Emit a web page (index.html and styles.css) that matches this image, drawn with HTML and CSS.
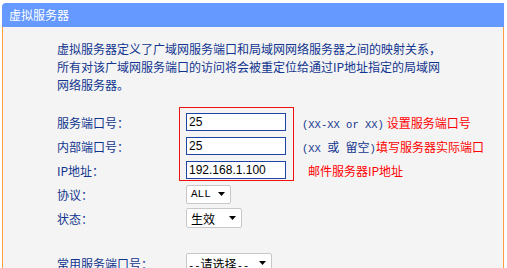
FILE: index.html
```html
<!DOCTYPE html>
<html lang="zh-CN">
<head>
<meta charset="utf-8">
<title>虚拟服务器</title>
<link rel="stylesheet" href="styles.css">
</head>
<body>
<div class="panel">
  <div class="panel-head">虚拟服务器</div>
  <div class="panel-body">
    <p class="desc">虚拟服务器定义了广域网服务端口和局域网网络服务器之间的映射关系，<br>所有对该广域网服务端口的访问将会被重定位给通过IP地址指定的局域网<br>网络服务器。</p>
    <div class="form">
      <div class="group">
        <div class="row">
          <span class="label">服务端口号：</span>
          <span class="input">25</span>
          <span class="hint"><span class="mono">(XX-XX or XX)</span> <span class="note">设置服务端口号</span></span>
        </div>
        <div class="row">
          <span class="label">内部端口号：</span>
          <span class="input">25</span>
          <span class="hint"><span class="mono">(XX </span>或<span class="mono"> </span>留空<span class="mono">)</span><span class="note">填写服务器实际端口</span></span>
        </div>
        <div class="row">
          <span class="label">IP地址：</span>
          <span class="input">192.168.1.100</span>
          <span class="hint"><span class="note note-pad">邮件服务器IP地址</span></span>
        </div>
      </div>
      <div class="row">
        <span class="label">协议：</span>
        <span class="select sel-all"><span class="mono">ALL</span><svg class="arrow" width="7" height="4" viewBox="0 0 7 4"><path d="M0 0H7L3.5 4Z" fill="#000"/></svg></span>
      </div>
      <div class="row">
        <span class="label">状态：</span>
        <span class="select sel-state"><span>生效</span><svg class="arrow" width="7" height="4" viewBox="0 0 7 4"><path d="M0 0H7L3.5 4Z" fill="#000"/></svg></span>
      </div>
      <div class="row row-gap">
        <span class="label">常用服务端口号：</span>
        <span class="select sel-common"><span><span class="mono">--</span>请选择<span class="mono">--</span></span><svg class="arrow" width="7" height="4" viewBox="0 0 7 4"><path d="M0 0H7L3.5 4Z" fill="#000"/></svg></span>
      </div>
    </div>
  </div>
</div>
</body>
</html>
```

FILE: styles.css
```css
html, body {
  margin: 0;
  padding: 0;
  background: #ffffff;
  overflow: hidden;
}

body {
  font-family: "Noto Sans CJK SC", "Liberation Sans", sans-serif;
  font-size: 12px;
  color: #12358f;
}

.panel {
  margin: 3px 0 0 2px;
  width: 502px;
}

.panel-head {
  height: 24px;
  line-height: 23px;
  background: #6699ff;
  color: #ffffff;
  padding-left: 7px;
  border-top-left-radius: 4px;
  font-size: 12px;
}

.panel-body {
  background: #f4f4f4;
  border-left: 1px solid #ff9f3f;
  border-right: 1px solid #ff9f3f;
  min-height: 300px;
  padding-top: 13px;
}

.desc {
  margin: 0 0 16px 54px;
  line-height: 18px;
}

.form {
  padding-left: 54px;
}

.group {
  position: relative;
}

.group::before {
  content: "";
  position: absolute;
  left: 122px;
  top: -3px;
  width: 115px;
  height: 74px;
  box-sizing: border-box;
  border: 1px solid #ee1111;
}

.row {
  display: flex;
  align-items: center;
  height: 24px;
  white-space: nowrap;
}

.row-gap {
  margin-top: 21px;
}

.label {
  width: 129px;
  flex: none;
}

.input {
  box-sizing: border-box;
  width: 100px;
  height: 18px;
  border: 1px solid #1f44a6;
  background: #ffffff;
  color: #000000;
  padding-left: 2px;
  font-family: "Liberation Sans", sans-serif;
  font-size: 12px;
  line-height: 16px;
  flex: none;
}

.hint {
  margin-left: 16px;
}

.mono {
  font-family: "Liberation Mono", monospace;
  font-size: 10.5px;
}

.note {
  color: #ff0000;
}

.note-pad {
  padding-left: 6px;
}

.select {
  box-sizing: border-box;
  display: flex;
  align-items: center;
  justify-content: space-between;
  height: 20px;
  border: 1px solid #c8c8c8;
  border-radius: 2px;
  background: #ffffff;
  color: #000000;
  padding: 0 5px 0 4px;
  flex: none;
}

.sel-all {
  width: 45px;
  height: 19px;
}

.sel-all .mono {
  font-size: 11px;
}

.sel-state {
  width: 56px;
}

.sel-common {
  width: 86px;
  padding-left: 1px;
}

.arrow {
  display: block;
  flex: none;
}
```
